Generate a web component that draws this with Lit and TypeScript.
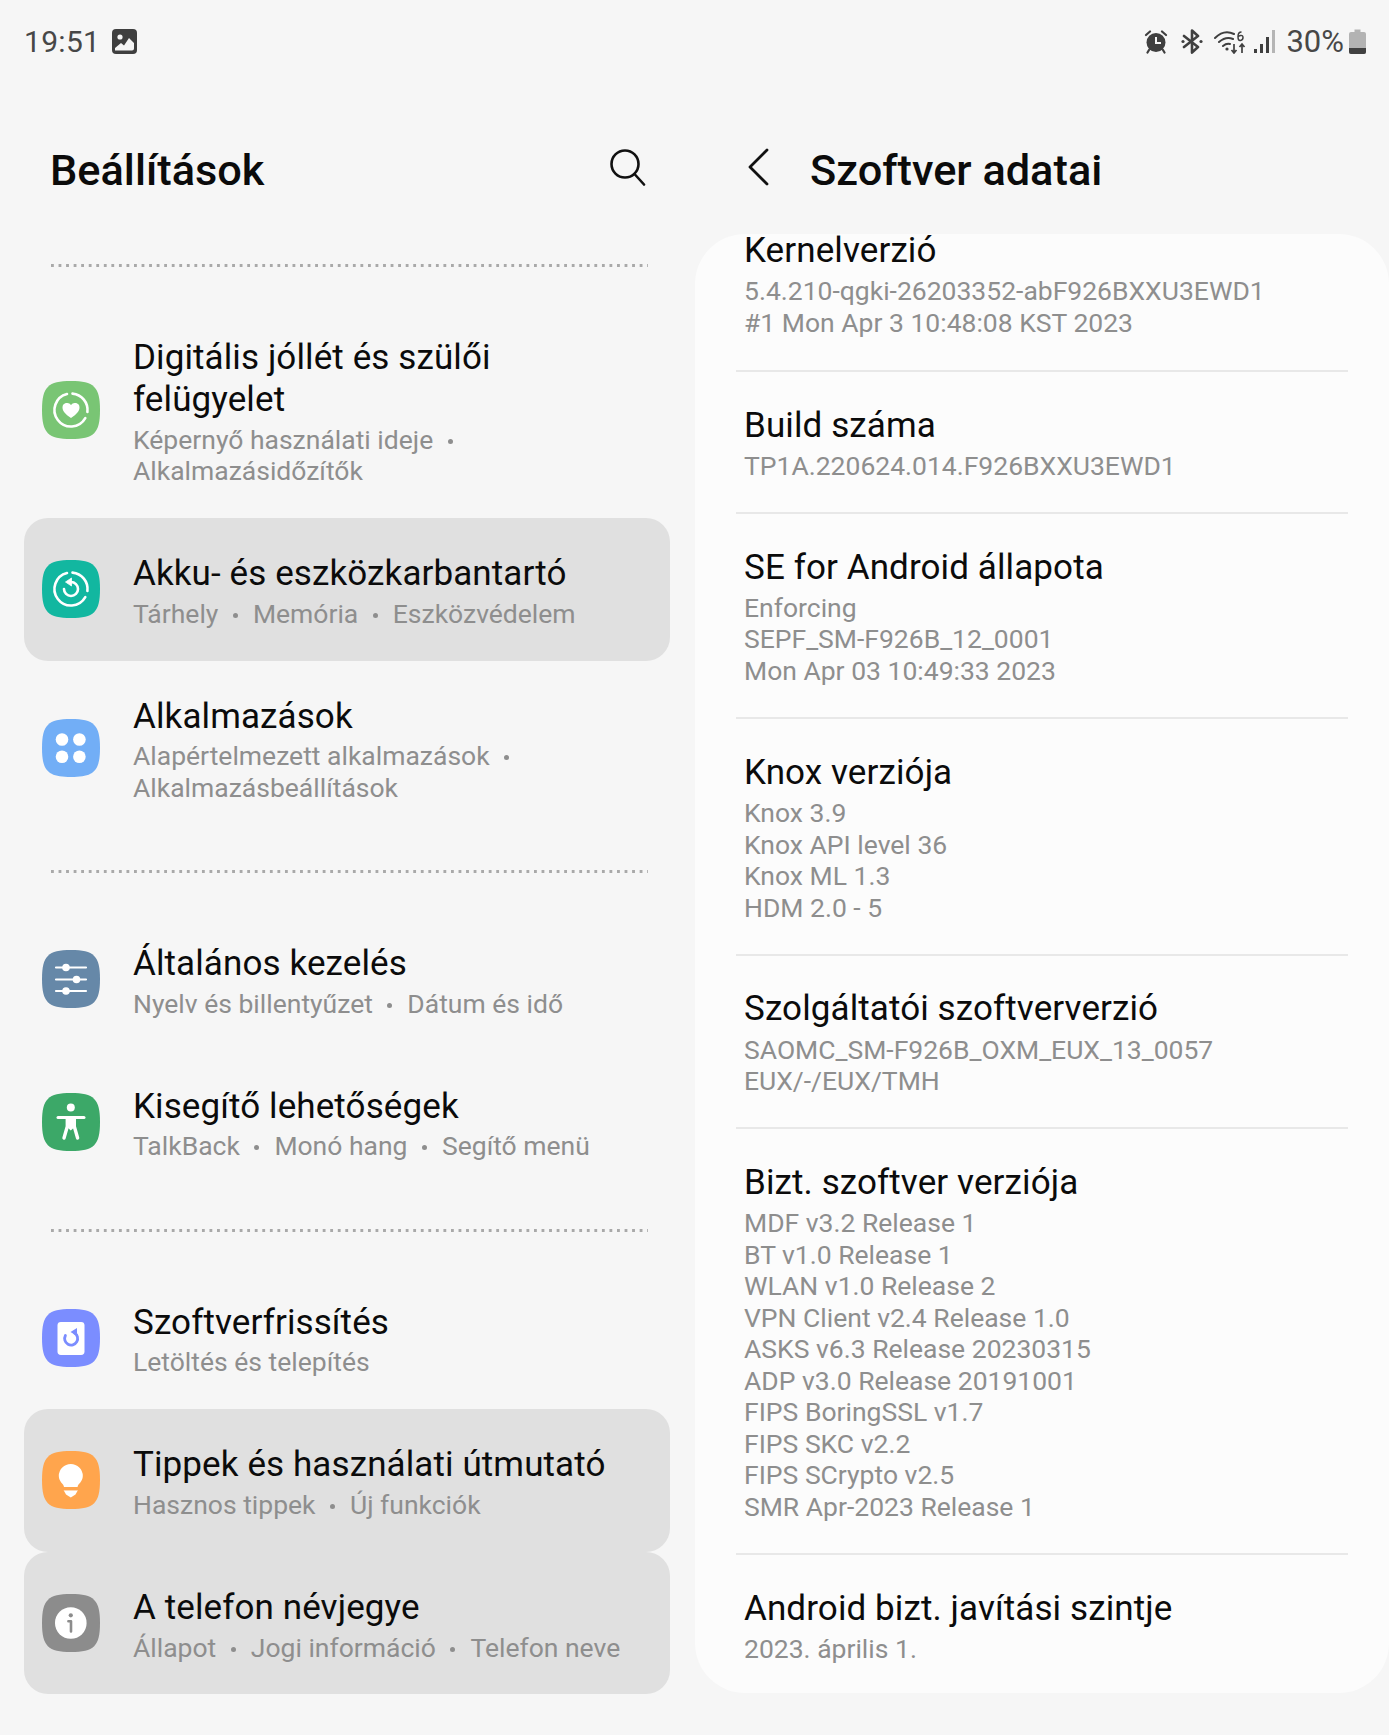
import { LitElement, html, css, svg } from "lit";
import { customElement } from "lit/decorators.js";

const SQ = "M0 29C0 6 6 0 29 0S58 6 58 29S52 58 29 58S0 52 0 29Z";
const RING = svg`<path d="M30.5 12.6A16.5 16.5 0 0 1 45.4 31M43.3 37.2A16.5 16.5 0 1 1 25 13" fill="none" stroke="#fff" stroke-width="2.6" stroke-linecap="round"/>`;

const icons: Record<string, any> = {
  well: svg`<path d=${SQ} fill="#79c574"/>${RING}<path d="M29 37C23 33 20.5 30 20.5 26.5a4.6 4.6 0 0 1 8.5-2.4a4.6 4.6 0 0 1 8.5 2.4C37.5 30 35 33 29 37Z" fill="#fff"/>`,
  care: svg`<path d=${SQ} fill="#12b7a0"/>${RING}<path d="M29 22A7 7 0 1 1 22 29" fill="none" stroke="#fff" stroke-width="2.6" stroke-linecap="round"/><path d="M29.5 18V26L23.5 22Z" fill="#fff" stroke="#fff" stroke-width="0.8" stroke-linejoin="round"/>`,
  apps: svg`<path d=${SQ} fill="#72aef6"/><circle cx="20" cy="20.5" r="6.3" fill="#fff"/><circle cx="37.4" cy="20.5" r="6.3" fill="#fff"/><circle cx="20" cy="37.8" r="6.3" fill="#fff"/><circle cx="37.4" cy="37.8" r="6.3" fill="#fff"/>`,
  general: svg`<path d=${SQ} fill="#6688a8"/><path d="M14 17.5H44M14 29.5H44M14 41H44" stroke="#fff" stroke-width="2.2" stroke-linecap="round"/><circle cx="24" cy="17.5" r="3.8" fill="#fff"/><circle cx="34.5" cy="29.5" r="3.8" fill="#fff"/><circle cx="24" cy="41" r="3.8" fill="#fff"/>`,
  access: svg`<path d=${SQ} fill="#3ca868"/><circle cx="28.8" cy="14.5" r="4" fill="#fff"/><path d="M16 24.5H42" stroke="#fff" stroke-width="3" stroke-linecap="round"/><path d="M25.3 26V33.5L22 45M32.3 26V33.5L35.6 45" fill="none" stroke="#fff" stroke-width="3.4" stroke-linecap="round" stroke-linejoin="round"/><path d="M25 24.5H32.6V34L28.8 37.5L25 34Z" fill="#fff"/>`,
  update: svg`<path d=${SQ} fill="#7b8dff"/><rect x="15.5" y="13" width="27" height="33" rx="3.4" fill="#fff"/><path d="M23.4 26.500A6.500 6.500 0 1 0 32.500 24" fill="none" stroke="#7b8dff" stroke-width="2.800" stroke-linecap="round"/><path d="M28.500 23L35 19V27Z" fill="#7b8dff"/>`,
  tips: svg`<path d=${SQ} fill="#ffa54d"/><path d="M22 36C22 33 16.8 31 16.8 25A12 12 0 0 1 40.8 25C40.8 31 35.6 33 35.6 36Z" fill="#fff"/><path d="M21.5 39H36L33.5 43.5L28.8 46.5L24 43.5Z" fill="#fff"/><path d="M20 38.8H38" stroke="#ffa54d" stroke-width="1.3"/>`,
  about: svg`<path d=${SQ} fill="#8c8c8c"/><circle cx="28.8" cy="29" r="15.8" fill="#fff"/><circle cx="28.8" cy="21.3" r="2.1" fill="#8c8c8c"/><path d="M26.4 27.3H29V37.5" fill="none" stroke="#8c8c8c" stroke-width="2.6" stroke-linecap="round" stroke-linejoin="round"/>`,
};

type Row = { icon: string; title: string[]; sub: string[][]; on?: boolean };
const groups: Row[][] = [
  [
    { icon: "well", title: ["Digitális jóllét és szülői", "felügyelet"], sub: [["Képernyő használati ideje", ""], ["Alkalmazásidőzítők"]] },
    { icon: "care", title: ["Akku- és eszközkarbantartó"], sub: [["Tárhely", "Memória", "Eszközvédelem"]], on: true },
    { icon: "apps", title: ["Alkalmazások"], sub: [["Alapértelmezett alkalmazások", ""], ["Alkalmazásbeállítások"]] },
  ],
  [
    { icon: "general", title: ["Általános kezelés"], sub: [["Nyelv és billentyűzet", "Dátum és idő"]] },
    { icon: "access", title: ["Kisegítő lehetőségek"], sub: [["TalkBack", "Monó hang", "Segítő menü"]] },
  ],
  [
    { icon: "update", title: ["Szoftverfrissítés"], sub: [["Letöltés és telepítés"]] },
    { icon: "tips", title: ["Tippek és használati útmutató"], sub: [["Hasznos tippek", "Új funkciók"]], on: true },
    { icon: "about", title: ["A telefon névjegye"], sub: [["Állapot", "Jogi információ", "Telefon neve"]], on: true },
  ],
];

const details: [string, string[]][] = [
  ["Kernelverzió", ["5.4.210-qgki-26203352-abF926BXXU3EWD1", "#1 Mon Apr 3 10:48:08 KST 2023"]],
  ["Build száma", ["TP1A.220624.014.F926BXXU3EWD1"]],
  ["SE for Android állapota", ["Enforcing", "SEPF_SM-F926B_12_0001", "Mon Apr 03 10:49:33 2023"]],
  ["Knox verziója", ["Knox 3.9", "Knox API level 36", "Knox ML 1.3", "HDM 2.0 - 5"]],
  ["Szolgáltatói szoftververzió", ["SAOMC_SM-F926B_OXM_EUX_13_0057", "EUX/-/EUX/TMH"]],
  ["Bizt. szoftver verziója", ["MDF v3.2 Release 1", "BT v1.0 Release 1", "WLAN v1.0 Release 2", "VPN Client v2.4 Release 1.0", "ASKS v6.3 Release 20230315", "ADP v3.0 Release 20191001", "FIPS BoringSSL v1.7", "FIPS SKC v2.2", "FIPS SCrypto v2.5", "SMR Apr-2023 Release 1"]],
  ["Android bizt. javítási szintje", ["2023. április 1."]],
];

@customElement("app-root")
export class AppRoot extends LitElement {
  static styles = css`
    :host { display: block; width: 1389px; height: 1735px; overflow: hidden; background: #f6f6f6; font-family: Roboto, "Liberation Sans", sans-serif; color: #0b0b0b; }
    .status { height: 82px; display: flex; align-items: center; justify-content: space-between; padding: 0 23px 0 24px; box-sizing: border-box; color: #474747; font-size: 30px; }
    .status > div { display: flex; align-items: center; }
    .time { margin-right: 12px; letter-spacing: 0.3px; }
    .pct { font-size: 31px; margin-right: 5px; }
    .ic0 { margin-right: 13px; }
    .ic1 { margin-right: 11px; }
    .ic2 { margin-right: 7px; }
    .ic3 { margin-right: 11px; }
    .main { display: grid; grid-template-columns: 695px 694px; }
    .head { height: 152px; box-sizing: border-box; padding-top: 63px; display: flex; align-items: flex-start; font-size: 43.3px; font-weight: 500; line-height: 52px; }
    .left { padding: 0 25px 0 24px; }
    .left .head { justify-content: space-between; padding-left: 26px; padding-right: 23px; }
    .search { margin-top: 3px; }
    .sep { height: 3px; margin: 30px 22px 0 27px; background: linear-gradient(90deg, #a9a9a9 3px, transparent 3px) 0 0 / 7.55px 3px repeat-x; }
    .group { padding-top: 35px; }
    .group + .sep { margin-top: 35.5px; }
    .row { display: flex; align-items: center; gap: 33px; padding: 35.2px 18px 31.25px; border-radius: 24px; }
    .row.on { background: #e0e0e0; }
    .row svg { flex: none; margin-bottom: 4px; }
    .t { font-size: 35px; line-height: 42px; letter-spacing: 0.1px; }
    .t + .s { margin-top: 2.6px; }
    .s { font-size: 26.5px; line-height: 31.5px; color: #8e8e8e; }
    .dot { display: inline-block; width: 5px; height: 5px; border-radius: 50%; background: #8e8e8e; margin: 0 15px 0 14.5px; vertical-align: 5px; }
    .right .head { padding-left: 52px; gap: 41px; }
    .back { margin-top: 3px; }
    .card { height: 1459px; overflow: hidden; border-radius: 50px; background: #fcfcfc; padding: 0 41px; box-sizing: border-box; }
    .item { padding: 32.6px 8px 30.8px; border-bottom: 2px solid #e8e8e8; }
    .item .t + .s { margin-top: 3.2px; }
    .item:first-child { padding-top: 0; margin-top: -4px; padding-bottom: 31.9px; }
    .item:last-child { border-bottom: 0; }
  `;

  private row(r: Row) {
    return html`<div class="row ${r.on ? "on" : ""}">
      <svg width="58" height="58" viewBox="0 0 58 58">${icons[r.icon]}</svg>
      <div>
        ${r.title.map((t) => html`<div class="t">${t}</div>`)}
        ${r.sub.map((line) => html`<div class="s">${line.map((p, i) => html`${i ? html`<span class="dot"></span>` : ""}${p}`)}</div>`)}
      </div>
    </div>`;
  }

  render() {
    return html`
      <div class="status">
        <div>
          <span class="time">19:51</span>
          <svg width="25" height="25" viewBox="0 0 25 25"><rect width="25" height="25" rx="4" fill="#3f3f3f"/><circle cx="8" cy="8" r="2.6" fill="#f6f6f6"/><path d="M3 21.5V19L9 14L12 16.5L17 9L22 14V19.5Q22 21.5 20 21.5Z" fill="#f6f6f6"/></svg>
        </div>
        <div>
          <svg class="ic0" width="24" height="25" viewBox="0 0 24 25"><circle cx="12" cy="13.5" r="9.500" fill="#3f3f3f"/><path d="M12 8V14H17" fill="none" stroke="#f6f6f6" stroke-width="2"/><path d="M2 6L6 2.500M22 6L18 2.500M5 21L3.500 23.500M19 21L20.500 23.500" stroke="#3f3f3f" stroke-width="2.200" stroke-linecap="round"/></svg>
          <svg class="ic1" width="22" height="25" viewBox="0 0 22 25"><path d="M3 7L17 18L11 23.500V1.500L17 7L3 18" fill="none" stroke="#3f3f3f" stroke-width="2.600" stroke-linejoin="round" stroke-linecap="round"/><circle cx="2" cy="12.500" r="1.600" fill="#3f3f3f"/><circle cx="20" cy="12.500" r="1.600" fill="#3f3f3f"/></svg>
          <svg class="ic2" width="33" height="25" viewBox="0 0 33 25"><path d="M1 9Q10 0 20 5M5 13Q12 7 19 10M9 17Q12.500 14 16 15" fill="none" stroke="#3f3f3f" stroke-width="2" stroke-linecap="round"/><circle cx="13" cy="20" r="1.600" fill="#3f3f3f"/><path d="M20 24V15M17.500 21L20 24L22.500 21M28 24V15M25.500 18L28 15L30.500 18" fill="none" stroke="#3f3f3f" stroke-width="1.700"/><path d="M27.500 3Q24 3 24 7.500T26.500 11.500T29 8.500T26.500 6.500T24 8" fill="none" stroke="#3f3f3f" stroke-width="1.500"/></svg>
          <svg class="ic3" width="21" height="25" viewBox="0 0 21 25"><rect x="0" y="20" width="3" height="4" fill="#3f3f3f"/><rect x="6" y="15" width="3" height="9" fill="#3f3f3f"/><rect x="12" y="8" width="3" height="16" fill="#3f3f3f"/><rect x="18" y="1" width="3" height="23" fill="#b5b5b5"/></svg>
          <span class="pct">30%</span>
          <svg width="17" height="25" viewBox="0 0 17 25"><path d="M5.500 0.500H11.500V3H15Q17 3 17 5V23Q17 25 15 25H2Q0 25 0 23V5Q0 3 2 3H5.500Z" fill="#b3b3b3"/><path d="M0 19H17V23Q17 25 15 25H2Q0 25 0 23Z" fill="#414141"/></svg>
        </div>
      </div>
      <div class="main">
        <div class="left">
          <div class="head">
            <span>Beállítások</span>
            <svg class="search" width="38" height="38" viewBox="0 0 38 38"><circle cx="16" cy="16" r="13.500" fill="none" stroke="#111" stroke-width="2.600"/><path d="M25.500 26L35 36.500" stroke="#111" stroke-width="2.600" stroke-linecap="round"/></svg>
          </div>
          ${groups.map((g) => html`<div class="sep"></div><div class="group">${g.map((r) => this.row(r))}</div>`)}
        </div>
        <div class="right">
          <div class="head">
            <svg class="back" width="22" height="38" viewBox="0 0 22 38"><path d="M20 2L3 19L20 36" fill="none" stroke="#111" stroke-width="2.800" stroke-linecap="round" stroke-linejoin="round"/></svg>
            <span>Szoftver adatai</span>
          </div>
          <div class="card">
            ${details.map(([t, lines]) => html`<div class="item"><div class="t">${t}</div>${lines.map((l) => html`<div class="s">${l}</div>`)}</div>`)}
          </div>
        </div>
      </div>
    `;
  }
}
